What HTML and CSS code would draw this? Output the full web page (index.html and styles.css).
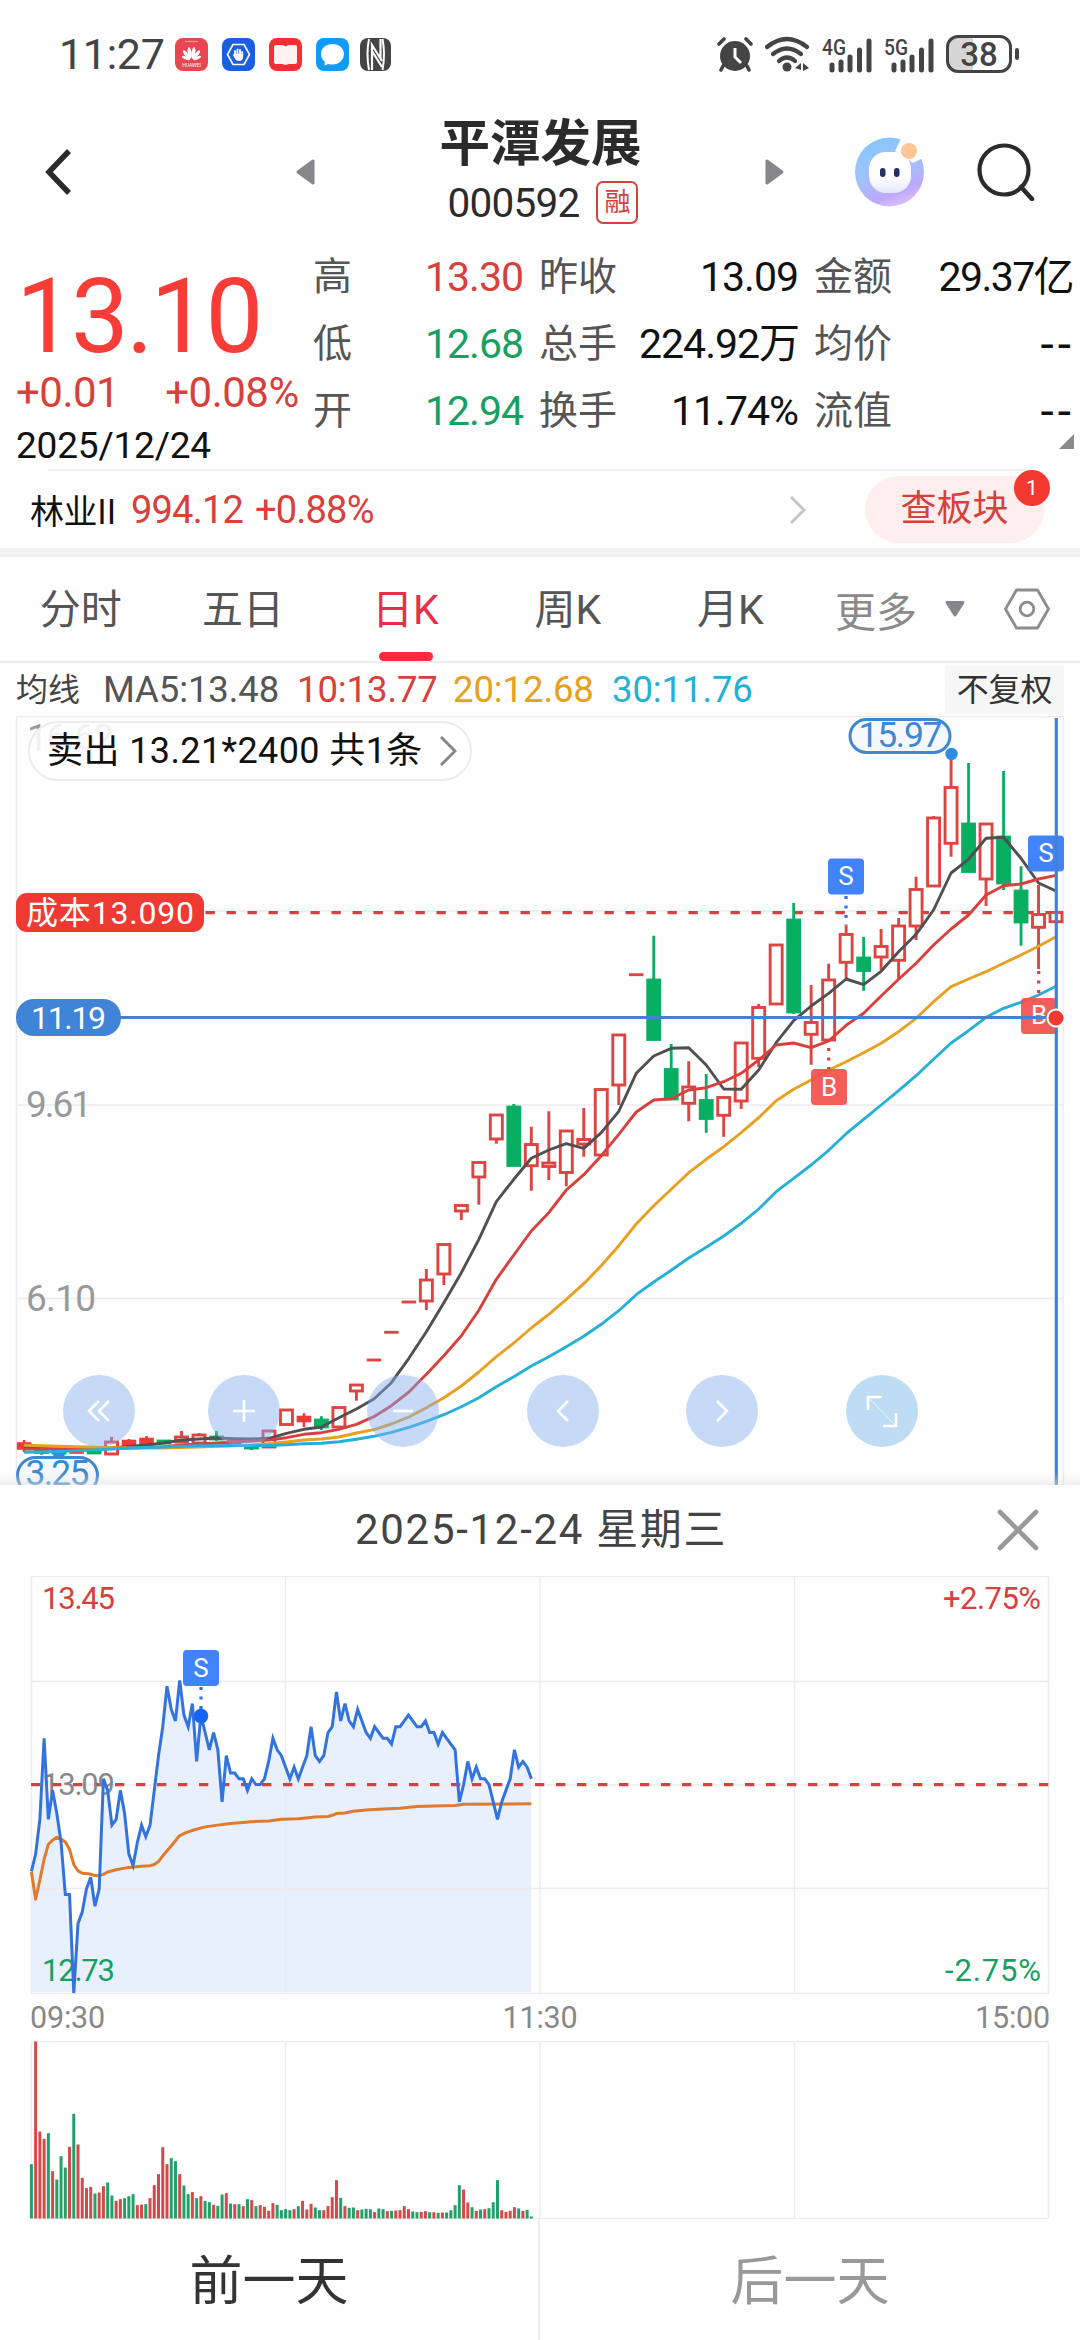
FILE: index.html
```html
<!DOCTYPE html>
<html lang="zh-CN">
<head>
    <meta charset="UTF-8">
    <meta name="viewport" content="width=device-width, initial-scale=1.0">
    <title>平潭发展 000592</title>
    <link rel="stylesheet" href="styles.css">
</head>
<body>
    <div class="status-bar">
        <span class="clock">11:27</span>
        <div class="status-apps">
            <svg width="33" height="33" viewBox="0 0 33 33">
                <rect width="33" height="33" rx="8" fill="#ea4550"/>
                <path d="M10 3.5h13" stroke="#ff9a96" stroke-width="1.2"/>
                <g fill="#fff">
                    <ellipse cx="14.6" cy="15" rx="2" ry="5.8" transform="rotate(-8 14.6 15)"/>
                    <ellipse cx="18.4" cy="15" rx="2" ry="5.8" transform="rotate(8 18.4 15)"/>
                    <ellipse cx="11.6" cy="17" rx="1.7" ry="5.5" transform="rotate(-36 11.6 17)"/>
                    <ellipse cx="21.4" cy="17" rx="1.7" ry="5.5" transform="rotate(36 21.4 17)"/>
                    <ellipse cx="10.8" cy="20" rx="1.4" ry="4.2" transform="rotate(-64 10.8 20)"/>
                    <ellipse cx="22.2" cy="20" rx="1.4" ry="4.2" transform="rotate(64 22.2 20)"/>
                </g>
                <text x="16.5" y="28.5" class="huawei">HUAWEI</text>
            </svg>
            <svg width="33" height="33" viewBox="0 0 33 33">
                <rect width="33" height="33" rx="8" fill="#1a5ee8"/>
                <path d="M11 6.5h11l5.5 10-5.5 10H11l-5.5-10z" fill="none" stroke="#fff" stroke-width="1.6" stroke-linejoin="round"/>
                <path d="M13 18v-5M15.5 17v-5.5M18 17v-5M20.2 18v-4" stroke="#fff" stroke-width="1.9" stroke-linecap="round"/>
                <path d="M12 16h9v3q0 4-4 4-3 0-4.5-3l-1.7-3z" fill="#fff"/>
            </svg>
            <svg width="33" height="33" viewBox="0 0 33 33">
                <rect width="33" height="33" rx="8" fill="#f72f35"/>
                <path d="M5 9q0-2 2-2h6q2 0 3.5 1.500Q18 7 20 7h6q2 0 2 2v15q0 2-2 2h-6l-3.500 1-3.500-1H7q-2 0-2-2z" fill="#fff2f0"/>
            </svg>
            <svg width="33" height="33" viewBox="0 0 33 33">
                <rect width="33" height="33" rx="8" fill="#119bf8"/>
                <path d="M16.5 6C23 6 28 10.3 28 16s-5 10.5-11.5 10.5c-1.600 0-3 0-4.200-.6L8.500 27.500l.3-3.700C6.300 21.800 5 19 5 16 5 10.300 10 6 16.500 6z" fill="#fff"/>
            </svg>
            <svg width="32" height="33" viewBox="0 0 32 33">
                <rect width="31" height="33" rx="8" fill="#444"/>
                <path d="M9 1q-3 15 0 31M22.500 1q3 15 0 31" fill="none" stroke="#fff" stroke-width="2"/>
                <path d="M12 32V7l10 16M12 13l10 16M20.500 1v20" fill="none" stroke="#fff" stroke-width="2.200"/>
            </svg>
        </div>
        <div class="status-right">
            <svg width="36" height="36" viewBox="0 0 36 36">
                <circle cx="18" cy="20" r="15" fill="#444"/>
                <path d="M18 12v9l6 6" stroke="#fff" stroke-width="3" fill="none"/>
                <path d="M2 8l5-5M34 8l-5-5M6 30l-2 4M30 30l2 4" stroke="#444" stroke-width="3.6" stroke-linecap="round"/>
            </svg>
            <svg class="wifi" width="45" height="36" viewBox="0 0 45 36">
                <g fill="none" stroke="#444" stroke-width="4.2" stroke-linecap="round">
                    <path d="M2 11Q22 -5 42 11"/>
                    <path d="M8 18Q22 7 36 18"/>
                    <path d="M14 25q8-7 16 0"/>
                </g>
                <circle cx="22" cy="31" r="4.5" fill="#444"/>
                <path d="M30 32l6-5v7zM38 27l6 5-6 3z" fill="#444"/>
            </svg>
            <svg width="52" height="40" viewBox="-1 -4 52 40">
                <text x="0" y="17" class="net" textLength="24" lengthAdjust="spacingAndGlyphs">4G</text>
                <path d="M10 27v5M19 24v8M28 19v13M37.5 12v20M47 3v29" stroke="#444" stroke-width="5" stroke-linecap="round"/>
            </svg>
            <svg class="sig5" width="52" height="40" viewBox="-1 -4 52 40">
                <text x="0" y="17" class="net" textLength="24" lengthAdjust="spacingAndGlyphs">5G</text>
                <path d="M10 27v5M19 24v8M28 19v13M37.5 12v20M47 3v29" stroke="#444" stroke-width="5" stroke-linecap="round"/>
            </svg>
            <div class="battery"><span>38</span></div>
            <i class="battery-tip"></i>
        </div>
    </div>

    <header class="header">
        <svg class="back" width="27" height="46" viewBox="0 0 27 46"><path d="M24 2 4 23l20 21" fill="none" stroke="#2b2b2b" stroke-width="5.5"/></svg>
        <svg class="prev" width="20" height="28" viewBox="0 0 20 28"><path d="M18 3v22L3 14z" fill="#86868c" stroke="#86868c" stroke-width="3" stroke-linejoin="round"/></svg>
        <div class="title">
            <h1>平潭发展</h1>
            <p>000592<span class="tag">融</span></p>
        </div>
        <svg class="next" width="20" height="28" viewBox="0 0 20 28"><path d="M2 3v22l15-11z" fill="#86868c" stroke="#86868c" stroke-width="3" stroke-linejoin="round"/></svg>
        <svg class="robot" width="70" height="70" viewBox="0 0 70 70">
            <defs>
                <linearGradient id="ring" x1="0.3" y1="0" x2="0.7" y2="1">
                    <stop offset="0" stop-color="#84c8fb"/>
                    <stop offset="0.5" stop-color="#a5bffb"/>
                    <stop offset="0.8" stop-color="#bda8fd"/>
                    <stop offset="1" stop-color="#e0c4f6"/>
                </linearGradient>
                <linearGradient id="face" x1="0" y1="0" x2="0" y2="1">
                    <stop offset="0.6" stop-color="#fff"/>
                    <stop offset="1" stop-color="#e6e6ff"/>
                </linearGradient>
            </defs>
            <circle cx="34.5" cy="35" r="34.5" fill="url(#ring)"/>
            <path d="M40 14 47 0h23v20l-12 6z" fill="#fefefe"/>
            <rect x="14" y="15" width="42" height="41" rx="17" fill="url(#face)"/>
            <circle cx="54" cy="14" r="8" fill="#fdc795"/>
            <rect x="25" y="31" width="5.500" height="9" rx="2.700" fill="#26305c"/>
            <rect x="39" y="31" width="5.500" height="9" rx="2.700" fill="#26305c"/>
        </svg>
        <svg class="search" width="58" height="58" viewBox="0 0 58 58">
            <circle cx="27" cy="27" r="24.5" fill="none" stroke="#2b2b2b" stroke-width="4.2"/>
            <path d="M44 44l11 12" stroke="#2b2b2b" stroke-width="4.6" stroke-linecap="round"/>
        </svg>
    </header>

    <section class="quote">
        <div class="price">
            <div class="price-now">13.10</div>
            <div class="price-change"><span>+0.01</span><span>+0.08%</span></div>
            <div class="price-date">2025/12/24</div>
        </div>
        <div class="stats">
            <span>高</span><b class="up">13.30</b><span>昨收</span><b>13.09</b><span>金额</span><b>29.37亿</b>
            <span>低</span><b class="down">12.68</b><span>总手</span><b>224.92万</b><span>均价</span><b class="dash">--</b>
            <span>开</span><b class="down">12.94</b><span>换手</span><b>11.74%</b><span>流值</span><b class="dash">--</b>
        </div>
        <i class="corner"></i>
    </section>

    <section class="sector">
        <span class="sector-name">林业II</span>
        <span class="sector-value">994.12</span>
        <span class="sector-value">+0.88%</span>
        <svg class="sector-arrow" width="18" height="30" viewBox="0 0 18 30"><path d="M2 2l13 13L2 28" fill="none" stroke="#c8c8c8" stroke-width="3"/></svg>
        <div class="sector-btn">查板块<em>1</em></div>
    </section>

    <nav class="tabs">
        <span class="tab">分时</span>
        <span class="tab">五日</span>
        <span class="tab active">日K</span>
        <span class="tab">周K</span>
        <span class="tab">月K</span>
        <span class="more">更多</span>
        <svg class="more-arrow" width="22" height="18" viewBox="0 0 22 18"><path d="M3 2.5h16L11 15z" fill="#86868c" stroke="#86868c" stroke-width="3" stroke-linejoin="round"/></svg>
        <svg class="hex" width="46" height="42" viewBox="0 0 46 42">
            <path d="M12.5 2h21L44.5 21l-11 19h-21L1.5 21z" fill="none" stroke="#8c8c8c" stroke-width="2.8" stroke-linejoin="round"/>
            <circle cx="23" cy="21" r="6.8" fill="none" stroke="#8c8c8c" stroke-width="2.8"/>
        </svg>
    </nav>

    <div class="ma-row">
        <span class="ma-title">均线</span>
        <span class="ma5">MA5:13.48</span>
        <span class="ma10">10:13.77</span>
        <span class="ma20">20:12.68</span>
        <span class="ma30">30:11.76</span>
        <span class="adjust">不复权</span>
    </div>

    <section class="kline">
        <svg width="1080" height="769" viewBox="0 716 1080 769">
            <path class="grid" d="M16 716.5H1064M16 911H1064M16 1105H1064M16 1298.5H1064M16.5 716V1485M1063.5 716V1485"/>
            <text x="27" y="750" class="axis" textLength="87">16.62</text>
            <text x="26" y="1117" class="axis" textLength="66">9.61</text>
            <text x="26" y="1311" class="axis" textLength="70">6.10</text>
            <path d="M205.5 912.7H1064" class="cost-line"/>
            <g id="candles"></g>
            <circle cx="59" cy="1453.5" r="6" fill="#2f8ee0"/>
            <rect x="17.5" y="1457.5" width="80" height="36" rx="18" class="extreme"/>
            <text x="57.5" y="1485" class="extreme-text" textLength="64">3.25</text>
            <g id="averages"></g>

            <rect x="850" y="719.5" width="100" height="33" rx="16.5" class="extreme"/>
            <text x="900.5" y="747" class="extreme-text" textLength="84">15.97</text>
            <circle cx="951.5" cy="754" r="6.2" fill="#2f8ee0"/>

            <path d="M846 896V925" class="dots blue"/>
            <path d="M828.7 1048V1069M1038.7 971V998" class="dots red"/>
            <rect x="828" y="858.5" width="36" height="36" rx="4" class="sell"/>
            <text x="846" y="884.5" class="mark">S</text>
            <rect x="1028" y="835.5" width="36" height="36" rx="4" class="sell"/>
            <text x="1046" y="861.5" class="mark">S</text>
            <rect x="811" y="1069" width="36" height="36" rx="4" class="buy"/>
            <text x="829" y="1095.5" class="mark">B</text>
            <rect x="1021" y="998" width="36" height="36" rx="4" class="buy"/>
            <text x="1039" y="1024" class="mark">B</text>

            <path d="M118 1017.5H1056M1056.3 718V1485" class="cross"/>
            <circle cx="1056" cy="1018" r="8.5" fill="#f2382f" stroke="#fff" stroke-width="2"/>
            <rect x="16" y="893" width="188" height="39" rx="11" fill="#ee3a33"/>
            <text x="110" y="924" class="line-label" textLength="168">成本13.090</text>
            <rect x="16" y="999" width="105" height="37" rx="18" fill="#4084d8"/>
            <text x="68.5" y="1029" class="line-label" textLength="75">11.19</text>
        </svg>
        <div class="trade-pill">卖出 13.21*2400 共1条
            <svg width="18" height="32" viewBox="0 0 18 32"><path d="M2 2l14 14L2 30" fill="none" stroke="#888" stroke-width="3"/></svg>
        </div>
        <div class="tools">
            <i><svg viewBox="0 0 72 72"><path d="M36 26 26 36l10 10M46 26 36 36l10 10"/></svg></i>
            <i><svg viewBox="0 0 72 72"><path d="M36 25v22M25 36h22"/></svg></i>
            <i><svg viewBox="0 0 72 72"><path d="M26 36h20"/></svg></i>
            <i><svg viewBox="0 0 72 72"><path d="M41 26 31 36l10 10"/></svg></i>
            <i><svg viewBox="0 0 72 72"><path d="M31 26l10 10-10 10"/></svg></i>
            <i class="full"><svg viewBox="0 0 72 72"><path d="M22 35V22h14M50 38v13H37"/><path d="M24 24l24 25" class="thin"/></svg></i>
        </div>
    </section>

    <section class="day-panel">
        <div class="day-head">
            <span>2025-12-24 星期三</span>
            <svg width="42" height="42" viewBox="0 0 42 42"><path d="M3 3l36 36M39 3 3 39" stroke="#999" stroke-width="4.6" stroke-linecap="round"/></svg>
        </div>
        <svg class="intraday" width="1080" height="419" viewBox="0 1576 1080 419">
            <path id="area" class="area"/>
            <path class="grid" d="M31 1576.5H1049M31 1681.5H1049M31 1785H1049M31 1888.5H1049M31 1993.5H1049M31.5 1576V1994M285.5 1576V1994M540 1576V1994M794.5 1576V1994M1048.5 1576V1994"/>
            <path d="M31 1784.6H1049" class="cost-line"/>
            <text x="42" y="1608.5" class="lvl up" textLength="73">13.45</text>
            <text x="42" y="1794.5" class="lvl" textLength="73">13.09</text>
            <text x="42" y="1981" class="lvl down" textLength="73">12.73</text>
            <text x="1041" y="1608.5" class="lvl up end" textLength="98">+2.75%</text>
            <text x="1041" y="1981" class="lvl down end" textLength="96">-2.75%</text>
            <polyline id="avg" class="avg"/>
            <polyline id="trend" class="trend"/>
            <path d="M201 1687V1710" class="dots blue"/>
            <circle cx="201" cy="1716" r="7.3" fill="#1464f6"/>
            <rect x="183" y="1650" width="36" height="36" rx="4" class="sell"/>
            <text x="201" y="1676.5" class="mark">S</text>
        </svg>
        <div class="times"><span>09:30</span><span>11:30</span><span>15:00</span></div>
        <svg class="volume" width="1080" height="178" viewBox="0 2041 1080 178">
            <path class="grid" d="M31 2041.5H1049M31 2218.5H1049M285.5 2041V2218M540 2041V2219M794.5 2041V2218M1048.5 2041V2218M31.5 2041V2218"/>
            <g id="volumes"></g>
        </svg>
        <div class="day-nav">
            <button>前一天</button>
            <button disabled>后一天</button>
        </div>
    </section>

    <script src="chart.js"></script>
</body>
</html>
```
FILE: styles.css
```css
* {
    box-sizing: border-box;
}
body {
    margin: 0;
    width: 1080px;
    height: 2340px;
    overflow: hidden;
    background: #fefefe;
    color: #111;
    font-family: Roboto, "Noto Sans CJK SC", sans-serif;
}
svg {
    display: block;
    flex-shrink: 0;
}
i, em, b {
    font-style: normal;
    font-weight: normal;
}
.up { color: #d8403c; fill: #d8403c; }
.down { color: #16a062; fill: #16a062; }

/* status bar */
.status-bar {
    display: flex;
    align-items: center;
    height: 108px;
    padding: 0 61px 0 59px;
    color: #444;
}
.clock {
    width: 116px;
    font-size: 43px;
    letter-spacing: -0.3px;
}
.status-apps {
    display: flex;
    gap: 14px;
}
.status-apps svg:last-child { margin-left: -3px; }
.huawei {
    font-size: 5px;
    fill: #fff;
    text-anchor: middle;
}
.status-right {
    display: flex;
    align-items: center;
    margin-left: auto;
}
.wifi { margin-left: 12px; margin-right: 11px; }
.sig5 { margin: 0 11px 0 10px; }
.net {
    font-size: 22px;
    font-weight: 500;
    fill: #444;
}
.battery {
    width: 66px;
    height: 38px;
    border: 3px solid #444;
    border-radius: 12px;
    background: linear-gradient(90deg, #d6d6d6 40%, #fff 40%);
    font-size: 33px;
    font-weight: 500;
    line-height: 33px;
    text-align: center;
}
.battery-tip {
    width: 4px;
    height: 12px;
    margin-left: 3px;
    border-radius: 2px;
    background: #444;
}

/* header */
.header {
    display: flex;
    align-items: center;
    height: 127px;
    padding-left: 45px;
}
.prev { margin-left: 223px; }
.title {
    width: 210px;
    margin: 0 120px;
    text-align: center;
}
.title h1 {
    margin: -5px -10px 0 -9px;
    font-size: 50.5px;
    line-height: 60px;
    font-weight: 700;
    color: #2b2b2b;
    white-space: nowrap;
}
.title p {
    display: flex;
    align-items: center;
    justify-content: center;
    gap: 17px;
    margin: 7px 0 0 6px;
    font-size: 40.5px;
    line-height: 44px;
    letter-spacing: -0.8px;
    color: #2b2b2b;
}
.tag {
    width: 42px;
    height: 43px;
    border: 2px solid #d8403c;
    border-radius: 7px;
    color: #d8403c;
    font-size: 26px;
    line-height: 38px;
    letter-spacing: 0;
}
.robot { margin-left: 70px; }
.search { margin-left: 52px; }

/* quote */
.quote {
    position: relative;
    display: flex;
    height: 234px;
}
.price {
    width: 313px;
    padding: 24px 0 0 16px;
    color: #d8403c;
}
.price-now {
    height: 112px;
    font-size: 103px;
    line-height: 116px;
    letter-spacing: -2.8px;
    color: #f83c38;
}
.price-change {
    display: flex;
    gap: 46px;
    font-size: 42px;
    line-height: 44px;
    letter-spacing: -0.5px;
}
.price-date {
    margin-top: 11px;
    font-size: 37px;
    line-height: 40px;
    letter-spacing: -0.2px;
    color: #111;
}
.stats {
    display: grid;
    grid-template-columns: 88px 138px 100px 175px 100px 159px;
    grid-auto-rows: 67px;
    align-items: center;
    padding-top: 9px;
    font-size: 41px;
    white-space: nowrap;
}
.stats span {
    font-size: 39px;
    line-height: 67px;
    color: #555;
}
.stats b {
    padding-right: 16px;
    line-height: 67px;
    letter-spacing: -1px;
    text-align: right;
}
.stats b:nth-child(6n) {
    padding-right: 0;
    letter-spacing: -1.6px;
}
.stats b:nth-child(6n + 2) { padding-right: 16px; }
.stats .dash:nth-child(6n) {
    font-size: 48px;
    letter-spacing: 4px;
    margin-right: -2px;
}
.corner {
    position: absolute;
    right: 6px;
    bottom: 20px;
    border-left: 15px solid transparent;
    border-bottom: 15px solid #8a8a8a;
}

/* sector */
.sector {
    display: flex;
    align-items: center;
    height: 88px;
    padding: 2px 36px 0 30px;
    border-bottom: 9px solid #f3f3f3;
    background: linear-gradient(#efefef, #efefef) 48px 0 / 987px 2px no-repeat;
}
.sector-name {
    width: 101px;
    font: 34px/60px "Noto Sans CJK SC", sans-serif;
    white-space: nowrap;
    letter-spacing: -0.5px;
}
.sector-value {
    margin-right: 12px;
    font-size: 38px;
    letter-spacing: -0.8px;
    color: #d8403c;
}
.sector-arrow { margin-left: auto; margin-right: 58px; }
.sector-btn {
    position: relative;
    width: 179px;
    height: 67px;
    border-radius: 34px;
    background: #feeeee;
    color: #d8403c;
    font-size: 36px;
    line-height: 66px;
    text-align: center;
}
.sector-btn em {
    position: absolute;
    top: -6px;
    right: -6px;
    width: 36px;
    height: 36px;
    border-radius: 50%;
    background: #f2382f;
    color: #fff;
    font-size: 21px;
    line-height: 36px;
}

/* tabs */
.tabs {
    display: flex;
    align-items: center;
    height: 106px;
    border-bottom: 2px solid #ededed;
    font-size: 41px;
    color: #555;
}
.tab {
    position: relative;
    width: 162.4px;
    padding-right: 1px;
    line-height: 107px;
    height: 104px;
    text-align: center;
}
.tab.active { color: #e5304c; }
.tab.active::after {
    content: "";
    position: absolute;
    left: 54px;
    bottom: 0;
    width: 54px;
    height: 9px;
    border-radius: 5px;
    background: #fb2a3c;
}
.more {
    margin-left: 23px;
    color: #8a8a8a;
}
.more-arrow { margin-left: 27px; }
.hex { margin-left: 38px; }

/* moving averages */
.ma-row {
    display: flex;
    align-items: center;
    height: 53px;
    padding: 0 16px;
    font-size: 36.5px;
    line-height: 48px;
    letter-spacing: -0.1px;
    color: #555;
}
.ma-title { width: 87px; font-size: 32px; color: #444; }
.ma5 { width: 194px; }
.ma10 { width: 156px; color: #d8403c; }
.ma20 { width: 159px; color: #e8a020; }
.ma30 { color: #25b0d8; }
.adjust {
    width: 119px;
    height: 48px;
    margin-left: auto;
    background: #f7f7f7;
    color: #333;
    font-size: 32px;
    line-height: 49px;
    text-align: center;
}

/* k line chart */
.kline {
    position: relative;
    height: 769px;
}
.kline::after {
    content: "";
    position: absolute;
    left: 0;
    right: 0;
    bottom: 0;
    height: 12px;
    background: linear-gradient(rgba(230, 230, 230, 0), rgba(225, 225, 225, .5));
}
.grid { fill: none; stroke: #ececee; stroke-width: 1.4; }
.axis { font-size: 37px; fill: #999; }
.cost-line {
    stroke: #cf4340;
    stroke-width: 3.2;
    stroke-dasharray: 9.3 11.7;
}
.cross { fill: none; stroke: #4682cc; stroke-width: 3.2; }
.extreme { fill: #f5f9fd; stroke: #3f87cf; stroke-width: 3; }
.extreme-text { font-size: 35.5px; fill: #3f87cf; text-anchor: middle; }
.line-label { font-size: 32px; fill: #fff; text-anchor: middle; }
.sell { fill: #4083fb; }
.buy { fill: #f2504a; fill-opacity: .92; }
.mark { font-size: 26px; fill: #fff; text-anchor: middle; }
.dots { stroke-width: 3.2; stroke-dasharray: 3 6.5; }
.dots.blue { stroke: #2f6fe8; }
.dots.red { stroke: #d8403c; }
.candle-up { fill: #fff; stroke: #dd4542; stroke-width: 2.9; }
.candle-flat { fill: #ee3a3a; stroke: #ee3a3a; stroke-width: 2.6; }
.candle-down { fill: #08ae62; stroke: #08ae62; stroke-width: 2.8; }
.ma-line { fill: none; stroke-width: 2.9; stroke-linejoin: round; }

.trade-pill {
    position: absolute;
    left: 28px;
    top: 5px;
    display: flex;
    align-items: center;
    gap: 16px;
    width: 444px;
    height: 60px;
    padding-left: 17px;
    border: 2px solid #ececec;
    border-radius: 30px;
    background: rgba(255, 255, 255, .86);
    font-size: 36px;
    letter-spacing: 0.4px;
    line-height: 54px;
    white-space: nowrap;
}
.tools {
    position: absolute;
    left: 63px;
    top: 659px;
    display: flex;
    gap: 87.5px;
}
.tools i {
    width: 72px;
    height: 72px;
    border-radius: 50%;
    background: rgba(130, 173, 240, .45);
}
.tools i:first-child { margin-right: -15px; }
.tools .full { background: rgba(118, 184, 236, .47); }
.tools path { fill: none; stroke: #fff; stroke-width: 2.6; }
.tools .thin { stroke-width: 1; stroke-opacity: .7; }

/* one-day panel */
.day-panel { background: #fff; }
.day-head {
    display: flex;
    align-items: center;
    height: 91px;
    padding: 0 41px 0 355px;
    font-size: 42px;
    line-height: 84px;
    letter-spacing: 1.7px;
    color: #444;
}
.day-head span { white-space: nowrap; padding-bottom: 1px; }
.day-head svg { margin: -2px 0 0 auto; }
.lvl { font-size: 31px; }
.lvl:not(.up):not(.down) { fill: #888; }
.lvl.end { text-anchor: end; }
.area { fill: #e9f0fd; }
.avg { fill: none; stroke: #e27a2c; stroke-width: 3; stroke-linejoin: round; }
.trend { fill: none; stroke: #3273de; stroke-width: 3; }
.times {
    display: flex;
    justify-content: space-between;
    height: 46px;
    padding: 0 30px;
    font-size: 30.5px;
    line-height: 45px;
    letter-spacing: -0.2px;
    color: #888;
}
.vol-up { fill: #d34a48; }
.vol-down { fill: #22a06a; }
.day-nav {
    display: flex;
    height: 121px;
}
.day-nav button {
    width: 541px;
    border: none;
    border-right: 2px solid #eee;
    background: none;
    padding: 0 0 6px;
    color: #333;
    font: 53px "Noto Sans CJK SC", sans-serif;
}
.day-nav button:disabled {
    border-right: none;
    color: #999;
}
```
FILE: chart.js
```javascript
const NS = "http://www.w3.org/2000/svg";

function add(parent, tag, attrs) {
    const el = document.createElementNS(NS, tag);
    for (const key in attrs) el.setAttribute(key, attrs[key]);
    parent.appendChild(el);
}

// type, body top, body bottom, high, low
const candles = [
    ["f", 1443.5, 1448.5, 1440, 1452], ["g", 1451, 1452.5, 1449, 1454.7], ["g", 1451, 1453, 1451, 1454],
    ["f", 1451, 1452.5, 1450, 1453], ["g", 1450.5, 1453, 1450, 1454], ["r", 1442, 1454, 1437, 1454],
    ["f", 1441, 1445, 1439, 1445], ["f", 1439, 1444, 1436, 1444], ["g", 1441, 1443, 1440, 1444],
    ["r", 1437, 1442, 1431, 1443], ["r", 1435, 1443, 1433, 1443], ["g", 1437, 1439, 1431, 1441],
    ["f", 1441, 1445, 1440, 1446], ["g", 1446, 1448, 1444, 1450], ["r", 1431, 1447, 1430, 1447],
    ["r", 1410, 1424.5, 1410, 1424], ["f", 1417, 1421, 1413.3, 1427], ["g", 1420, 1427, 1416.3, 1430],
    ["r", 1407.5, 1427, 1407, 1427], ["r", 1385, 1391, 1385, 1400.7], ["d", 1360], ["d", 1332.3], ["d", 1302],
    ["r", 1280, 1301, 1269, 1310], ["r", 1244.5, 1274, 1244, 1285], ["r", 1205.5, 1211, 1205, 1220],
    ["r", 1162.5, 1177, 1162, 1204.7], ["r", 1115, 1139, 1115, 1143.7], ["g", 1107, 1165.5, 1104, 1166],
    ["r", 1144.5, 1165.7, 1126.7, 1190.7], ["r", 1163, 1166.5, 1111.3, 1180], ["r", 1131, 1172.5, 1131, 1186.3],
    ["r", 1139.5, 1144, 1108, 1156.7], ["r", 1089.5, 1155, 1089, 1155], ["r", 1035, 1085, 1035, 1105],
    ["d", 974.7], ["g", 980, 1039.5, 935.7, 1040], ["g", 1069.5, 1099, 1044, 1100],
    ["r", 1087, 1103.3, 1061.3, 1121.3], ["g", 1100.5, 1118.5, 1074, 1132.7], ["r", 1097.5, 1115.3, 1097, 1136.7],
    ["r", 1043, 1101, 1043, 1109], ["r", 1007.5, 1058.3, 1004, 1067], ["r", 945, 1004, 945, 1004],
    ["g", 920, 1012, 903, 1013.7], ["r", 1022.5, 1034.3, 985, 1064.7], ["r", 980, 1040, 963.7, 1040],
    ["r", 934.5, 962.3, 925.3, 978.3], ["g", 958, 970.5, 937, 990.7], ["r", 946.5, 957, 929, 970],
    ["r", 926, 960.3, 918, 978.7], ["r", 889.5, 926, 876.7, 940], ["r", 818, 886, 816, 886],
    ["r", 787.5, 843.3, 758, 856.7], ["g", 824, 871.5, 763, 872], ["r", 824, 879, 824, 906],
    ["g", 837, 883, 771, 890], ["g", 891, 922, 866.3, 945.7], ["r", 914.5, 927.3, 885, 969],
    ["r", 912.5, 921.7, 912, 921.7]
];

const averages = {
    "#505050": [1448, 1448.5, 1449, 1449.3, 1449.5, 1448, 1446.5, 1445, 1443, 1440, 1439, 1438, 1438.6, 1439, 1438.3,
        1433.3, 1429.3, 1427, 1417.7, 1409, 1399, 1382.7, 1358.3, 1331.7, 1302.7, 1272.7, 1239.3, 1201.7, 1179.3,
        1158.3, 1150, 1143.7, 1148.3, 1132.7, 1111.3, 1073.3, 1056, 1048.3, 1047.7, 1065, 1089, 1089.3, 1070, 1042.7,
        1020.7, 1006, 993.3, 979, 984.7, 971.3, 951.7, 934.3, 910, 873, 859.3, 838.3, 837.3, 858.3, 883, 891],
    "#d8403c": [1449, 1449, 1449, 1448.7, 1448.5, 1448.2, 1448, 1447.5, 1446.7, 1445, 1444, 1443, 1442, 1441, 1440,
        1437.7, 1434.3, 1432.7, 1429.3, 1424.3, 1416.7, 1405.7, 1392, 1374.3, 1355.7, 1335.7, 1310.3, 1279.3, 1255,
        1231, 1212.7, 1190, 1174.7, 1155.7, 1134.3, 1112, 1100, 1098.7, 1090, 1087.7, 1081.7, 1073.3, 1060, 1045,
        1043, 1047.7, 1041, 1025.3, 1013.3, 996, 979.3, 963.3, 945, 929, 915, 895, 885.7, 884, 879, 875.3],
    "#e8a020": [1445.3, 1445.7, 1446.2, 1446.7, 1447.2, 1447.7, 1448, 1448, 1448, 1447.5, 1447, 1446.3, 1445.7, 1445.2,
        1443.7, 1442, 1440, 1439, 1437, 1433, 1429.7, 1424, 1417, 1407.7, 1397.7, 1386, 1372, 1356.7, 1343, 1328,
        1314.3, 1299.3, 1283.7, 1265.7, 1245.7, 1224, 1205.7, 1189.3, 1172.7, 1159.3, 1146.7, 1132.7, 1117.7, 1100.7,
        1089.3, 1080, 1070, 1061.7, 1052.7, 1043.3, 1031.7, 1018.3, 1001.7, 986.7, 979, 971.7, 963.3, 955, 946.3, 936.7],
    "#25b0d8": [1452.3, 1452, 1451.5, 1450.7, 1450, 1449, 1448, 1447.5, 1447, 1446.3, 1445.7, 1445.7, 1445.5, 1445.5,
        1445.5, 1444.7, 1443.7, 1443.3, 1441.7, 1439.3, 1436.3, 1432.3, 1427.3, 1421.3, 1414.7, 1406.7, 1397.7, 1386.7,
        1376.7, 1366, 1356.7, 1346.7, 1336.3, 1324.3, 1310.7, 1294.7, 1282, 1270.3, 1258, 1247.3, 1236, 1223.3, 1209,
        1191.7, 1178.3, 1165, 1150.3, 1133.7, 1119.3, 1105, 1090.7, 1075.7, 1059.3, 1043, 1030.7, 1017.3, 1008.3,
        1002.3, 995, 986.3]
};

const candleX = i => 24.1 + i * 17.49;
const candleGroup = document.getElementById("candles");
const classes = { r: "candle-up", f: "candle-flat", g: "candle-down", d: "candle-up" };

candles.forEach(([type, top, bottom, high, low], i) => {
    const x = candleX(i);
    const cls = classes[type];
    if (type === "d") {
        add(candleGroup, "path", { d: `M${x - 7.2} ${top}H${x + 7.2}`, class: cls });
        return;
    }
    add(candleGroup, "path", { d: `M${x} ${high}V${top}M${x} ${bottom}V${low}`, class: cls });
    add(candleGroup, "rect", { x: x - 6, y: top, width: 12, height: bottom - top, class: cls });
});

for (const color in averages) {
    add(document.getElementById("averages"), "polyline", {
        points: averages[color].map((y, i) => `${candleX(i)},${y}`).join(" "),
        stroke: color,
        class: "ma-line"
    });
}

// minute prices, in cents away from 13.09
const prices = [-15, -12, -6, 8, -6, -1, -5, -10, -19, -19, -36, -24, -22, -18, -16, -21, -18, 1, -1, -7, -6, -1, -5,
    -12, -14, -10, -7, -9, -7, -1, 5, 10, 17, 13, 11, 18, 12, 10, 14, 4, 12, 9, 6, 9, 6, -3, 5, 2, 2, 1, 1, -1, 1, 0,
    0, 1, 4, 8, 6, 5, 3, 1, 3, 1, 3, 5, 10, 5, 4, 5, 9, 10, 16, 11, 14, 11, 10, 13, 11, 9, 8, 10, 9, 8, 8, 7, 10, 10,
    11, 12, 11, 10, 10, 11, 9, 9, 7, 9, 8, 7, 6, -3, 0, 4, 1, 3, 1, 1, 0, -3, -6, -3, -1, 1, 6, 3, 4, 3, 1];

// [minute, cents]
const avgPrice = [[0, -15.1], [1, -19.8], [2, -16.5], [3, -12.9], [4, -10.3], [5, -9.6], [6, -9.1], [7, -9.4],
    [8, -9.9], [9, -11.2], [10, -13.8], [11, -14.9], [12, -15.3], [13.5, -15.4], [15, -15.7], [16, -15.7], [17, -15.5],
    [18, -15.1], [20, -14.7], [23, -14.3], [26, -14.1], [28, -14], [29, -13.8], [30, -13.3], [31, -12.3], [33, -10.6],
    [35, -8.8], [36.5, -8.3], [38.5, -7.8], [41, -7.3], [44, -7], [47, -6.7], [52, -6.4], [56, -6.3], [59, -6],
    [63, -5.9], [67, -5.6], [70, -5.5], [71, -5.3], [72, -5], [74, -4.9], [76, -4.6], [79, -4.4], [83, -4.2],
    [87, -4.1], [91, -3.8], [95, -3.7], [100, -3.6], [102, -3.4], [118, -3.3]];

const minuteX = m => 31.4 + m * 4.237;
const priceY = c => 1784.6 - c * 5.79;
const trend = prices.map((c, m) => `${minuteX(m)},${priceY(c)}`).join(" ");

document.getElementById("trend").setAttribute("points", trend);
document.getElementById("area").setAttribute("d", `M${trend} L${minuteX(118)},1992 L${minuteX(0)},1992Z`);
document.getElementById("avg").setAttribute("points", avgPrice.map(([m, c]) => `${minuteX(m)},${priceY(c)}`).join(" "));

const volumes = "g163 r531 r261 r239 g256 r142 g117 g187 g153 r215 g314 r222 r122 r91 r95 g75 r78 r97 g108 g69 r53 r58 g61 g67 g73 " +
    "r40 r42 g43 r61 r100 r133 r214 r163 g181 g172 r133 g99 g73 r79 g61 r67 g53 g49 r41 g38 g72 r76 g45 r43 g43 r37 g58 r55 g37 r40 " +
    "r35 r23 r46 g41 g25 g28 g25 r28 g37 r53 r27 r44 g33 g25 r25 r37 r64 r115 g62 r37 g32 g33 r25 g27 g29 g28 r19 g30 g28 r22 g23 " +
    "r24 r25 r37 r28 g21 g19 r20 r22 g19 r19 g17 r18 g18 g25 g40 g100 r87 r48 g34 r23 g27 r28 g31 g49 g115 r25 r20 r23 r34 g30 r23 g26 g6";

volumes.split(" ").forEach((v, m) => {
    const h = v.slice(1) / 3;
    add(document.getElementById("volumes"), "rect", {
        x: minuteX(m) - 1.5,
        y: 2218.5 - h,
        width: 3,
        height: h,
        class: v[0] === "r" ? "vol-up" : "vol-down"
    });
});
```
